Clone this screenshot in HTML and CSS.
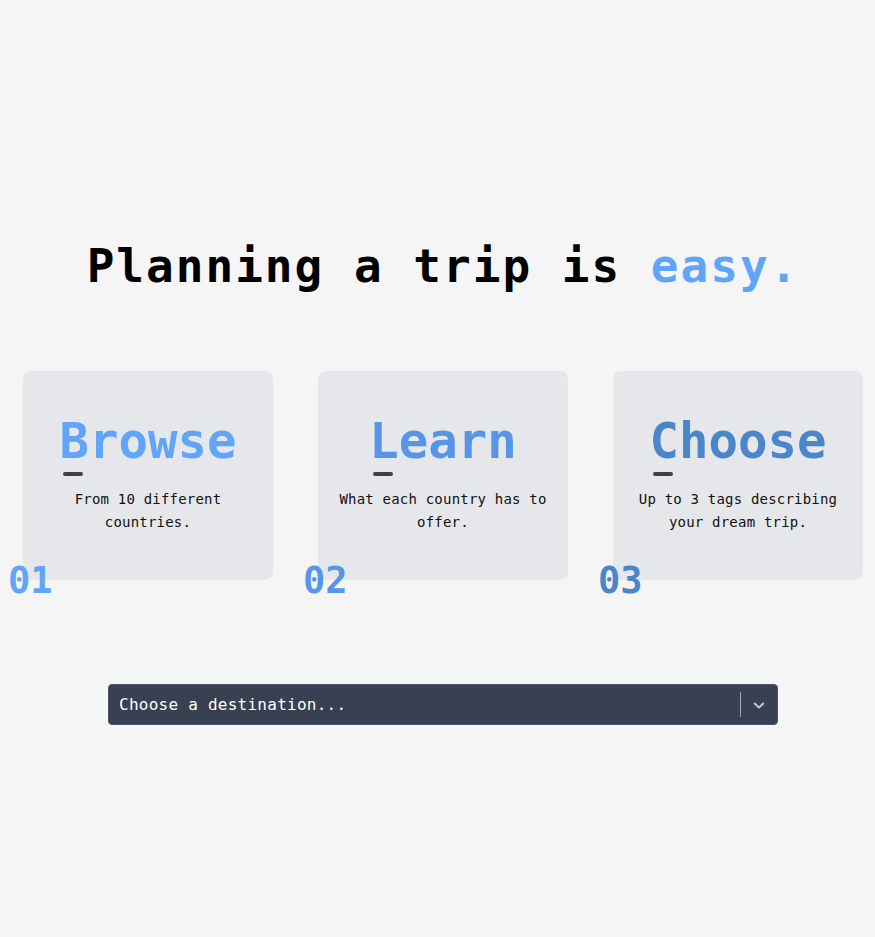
FILE: index.html
```html
<!DOCTYPE html>
<html lang="en">
<head>
<meta charset="utf-8">
<title>Planning a trip</title>
<link rel="stylesheet" href="styles.css">
</head>
<body>
<main class="page">
  <h1 class="title">Planning a trip is <span class="accent">easy.</span></h1>
  <section class="steps">
    <div class="card">
      <div class="head"><h2 class="heading c1">Browse</h2><div class="bar"></div></div>
      <p class="desc">From 10 different countries.</p>
      <span class="num c1">01</span>
    </div>
    <div class="card">
      <div class="head"><h2 class="heading c2">Learn</h2><div class="bar"></div></div>
      <p class="desc">What each country has to offer.</p>
      <span class="num c2">02</span>
    </div>
    <div class="card">
      <div class="head"><h2 class="heading c3">Choose</h2><div class="bar"></div></div>
      <p class="desc">Up to 3 tags describing your dream trip.</p>
      <span class="num c3">03</span>
    </div>
  </section>
  <div class="select">
    <div class="value">Choose a destination...</div>
    <div class="indicators">
      <span class="sep"></span>
      <span class="drop">
        <svg viewBox="0 0 20 20" width="20" height="20"><path fill="currentColor" d="M4.516 7.548c0.436-0.446 1.043-0.481 1.576 0l3.908 3.747 3.908-3.747c0.533-0.481 1.141-0.446 1.574 0 0.436 0.445 0.408 1.197 0 1.615-0.406 0.418-4.695 4.502-4.695 4.502-0.217 0.223-0.502 0.335-0.787 0.335s-0.57-0.112-0.789-0.335c0 0-4.287-4.084-4.695-4.502s-0.436-1.170 0-1.615z"/></svg>
      </span>
    </div>
  </div>
</main>
</body>
</html>
```

FILE: styles.css
```css
html, body {
  margin: 0;
  padding: 0;
  background: #f5f5f5;
}
body {
  font-family: "DejaVu Sans Mono", "Liberation Mono", monospace;
  color: #111111;
}
.page {
  padding: 239px 0 0 11px;
  display: flex;
  flex-direction: column;
  align-items: center;
}
.title {
  margin: 0;
  font-size: 46px;
  line-height: 55px;
  font-weight: bold;
  letter-spacing: 2px;
  color: #000000;
  text-align: center;
}
.accent {
  color: #60a5fa;
}
.steps {
  margin-top: 77px;
  display: flex;
  gap: 45px;
}
.card {
  position: relative;
  width: 250px;
  height: 209px;
  box-sizing: border-box;
  padding-top: 46px;
  background: #e5e7eb;
  border-radius: 8px;
  display: flex;
  flex-direction: column;
  align-items: center;
}
.head {
  display: flex;
  flex-direction: column;
  align-items: flex-start;
}
.heading {
  margin: 0;
  font-size: 49px;
  line-height: 49px;
  font-weight: bold;
}
.bar {
  margin: 6px 0 0 4px;
  width: 20px;
  height: 4px;
  border-radius: 2px;
  background: #404040;
}
.desc {
  margin: 12px 0 0;
  padding: 0 14px;
  font-size: 14px;
  letter-spacing: 0.2px;
  line-height: 23px;
  text-align: center;
  color: #111111;
}
.c1 { color: #60a5fa; }
.c2 { color: #5795e6; }
.c3 { color: #4a86ca; }
.num {
  position: absolute;
  left: -15px;
  bottom: -19px;
  font-size: 37px;
  line-height: 37px;
  font-weight: bold;
}
.select {
  margin-top: 104px;
  width: 670px;
  height: 41px;
  box-sizing: border-box;
  background: #374151;
  border: 1px solid #4b5563;
  border-radius: 4px;
  display: flex;
  align-items: center;
}
.value {
  flex: 1;
  padding: 0 10px;
  color: #ffffff;
  font-size: 16px;
  letter-spacing: 0.25px;
}
.indicators {
  align-self: stretch;
  display: flex;
  align-items: center;
}
.sep {
  width: 1px;
  align-self: stretch;
  margin: 7px 0;
  background: #a3a8b0;
}
.drop {
  display: flex;
  padding: 8px;
  color: #c6c9ce;
}
.drop svg {
  display: block;
  width: 18px;
  height: 18px;
  margin: 1px;
}
```
